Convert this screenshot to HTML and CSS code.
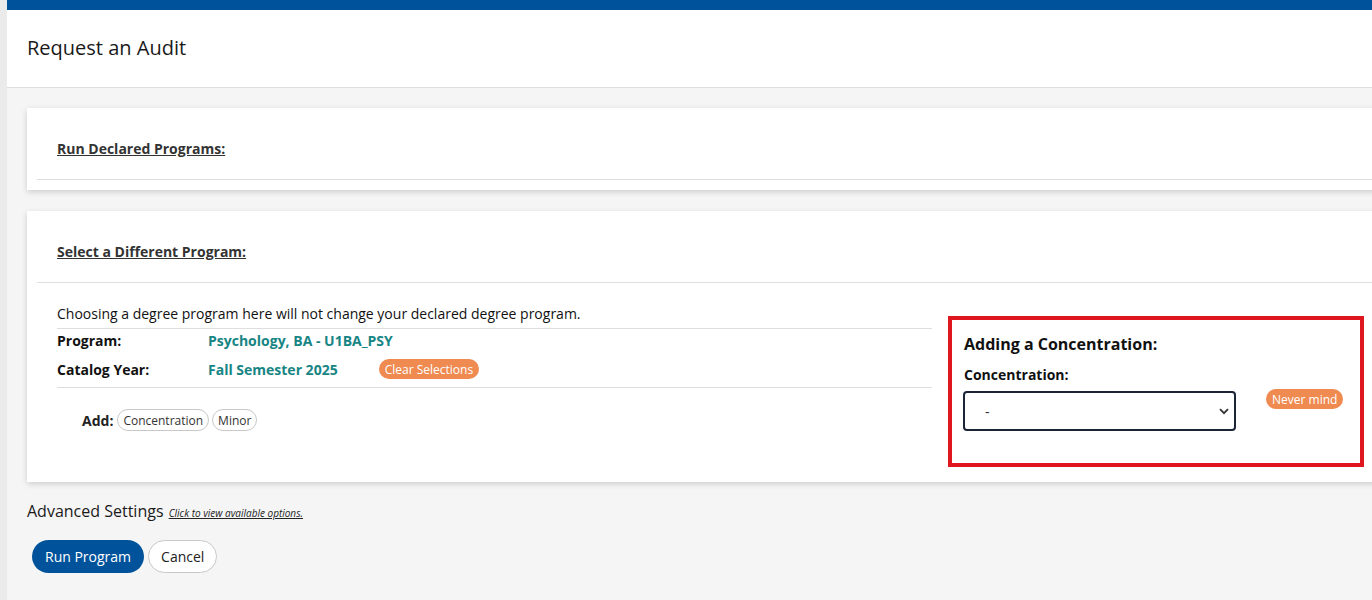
FILE: index.html
```html
<!DOCTYPE html>
<html lang="en">
<head>
    <meta charset="UTF-8">
    <meta name="viewport" content="width=device-width, initial-scale=1.0">
    <title>Request an Audit</title>
    <link rel="stylesheet" href="styles.css">
</head>
<body>
    <div class="page">
        <div class="topbar"></div>
        <div class="header">
            <h1>Request an Audit</h1>
        </div>

        <div class="content">
            <div class="card">
                <div class="card-title"><span>Run Declared Programs:</span></div>
            </div>

            <div class="card">
                <div class="card-title"><span>Select a Different Program:</span></div>
                <div class="card-body">
                    <div class="left-col">
                        <p class="note">Choosing a degree program here will not change your declared degree program.</p>
                        <div class="rows">
                            <div class="row">
                                <span class="label">Program:</span>
                                <span class="value">Psychology, BA - U1BA_PSY</span>
                            </div>
                            <div class="row">
                                <span class="label">Catalog Year:</span>
                                <span class="value">Fall Semester 2025</span>
                                <button class="pill-orange clear-btn">Clear Selections</button>
                            </div>
                        </div>
                        <div class="add-row">
                            <span class="add-label">Add:</span>
                            <button class="pill-outline">Concentration</button>
                            <button class="pill-outline">Minor</button>
                        </div>
                    </div>

                    <div class="right-col">
                        <div class="conc-box">
                            <h3>Adding a Concentration:</h3>
                            <label class="conc-label" for="conc">Concentration:</label>
                            <div class="conc-row">
                                <div class="select-wrap">
                                    <select id="conc">
                                        <option>-</option>
                                    </select>
                                    <svg class="chevron" width="10" height="7" viewBox="0 0 10 7">
                                        <path d="M1 1.2 L5 5.2 L9 1.2" fill="none" stroke="#333" stroke-width="1.8"/>
                                    </svg>
                                </div>
                                <button class="pill-orange">Never mind</button>
                            </div>
                        </div>
                    </div>
                </div>
            </div>

            <div class="advanced">
                <span class="adv-title">Advanced Settings</span>
                <a class="adv-link" href="#">Click to view available options.</a>
            </div>

            <div class="actions">
                <button class="btn-primary">Run Program</button>
                <button class="btn-secondary">Cancel</button>
            </div>
        </div>
    </div>
</body>
</html>
```

FILE: styles.css
```css
body {
    margin: 0;
    background: #ebebeb;
    font-family: "Open Sans", "Liberation Sans", sans-serif;
    color: #222;
    overflow: hidden;
}
.page {
    margin-left: 7px;
    background: #f5f5f5;
    min-height: 600px;
}
.topbar {
    height: 10px;
    background: #00539b;
}
.header {
    background: #fff;
    height: 78px;
    box-sizing: border-box;
    border-bottom: 1px solid #dedede;
    padding: 0 0 2px 20px;
    display: flex;
    align-items: center;
}
.header h1 {
    margin: 0;
    font-size: 20px;
    font-weight: 400;
    color: #1a1a1a;
}
.content {
    padding: 20px 0 0 20px;
}
.card {
    background: #fff;
    margin-right: -40px;
    margin-bottom: 21px;
    padding: 0 0 10px 10px;
    box-shadow: 0 2px 6px rgba(0, 0, 0, 0.16);
}
.card-title {
    padding: 30px 20px 20px;
    line-height: 20px;
    border-bottom: 1px solid #dedede;
}
.card-title span {
    font-size: 14px;
    font-weight: 700;
    color: #333;
    text-decoration: underline;
}
.card-body {
    display: flex;
    padding: 21px 0 0 20px;
}
.left-col {
    width: 875px;
}
.note {
    margin: 0;
    font-size: 14px;
    line-height: 20px;
    padding-bottom: 4px;
    border-bottom: 1px solid #dedede;
    color: #111;
}
.rows {
    display: flex;
    flex-direction: column;
    gap: 7px;
    padding: 0 0 7px;
    border-bottom: 1px solid #dedede;
}
.row {
    display: flex;
    align-items: center;
    height: 22px;
    font-size: 14px;
    font-weight: 700;
}
.label {
    width: 151px;
    color: #111;
}
.value {
    color: #178584;
}
.clear-btn {
    margin-left: 41px;
}
.pill-orange {
    background: #ef8a51;
    color: #fff;
    border: none;
    border-radius: 10px;
    height: 20px;
    padding: 0 6px;
    font-family: inherit;
    font-size: 12px;
    cursor: pointer;
}
.add-row {
    display: flex;
    align-items: center;
    gap: 3px;
    margin-top: 21px;
    padding-left: 25px;
    height: 22px;
}
.add-label {
    font-size: 14px;
    font-weight: 700;
    margin-right: 1px;
}
.pill-outline {
    background: #fff;
    border: 1px solid #c8c8c8;
    border-radius: 11px;
    height: 22px;
    padding: 0 5px;
    font-family: inherit;
    font-size: 12px;
    color: #333;
}
.right-col {
    margin-left: 16px;
    margin-top: 12px;
    margin-bottom: 5px;
}
.conc-box {
    border: 4px solid #e0161e;
    padding: 13px 0 32px 12px;
    width: 396px;
}
.conc-box h3 {
    margin: 0;
    font-size: 16px;
    line-height: 22px;
    font-weight: 700;
    color: #111;
}
.conc-label {
    display: block;
    margin-top: 10px;
    font-size: 14px;
    line-height: 20px;
    font-weight: 700;
    color: #111;
}
.conc-row {
    display: flex;
    align-items: flex-start;
    margin-top: 6px;
}
.select-wrap {
    position: relative;
    margin-left: -1px;
}
.select-wrap select {
    appearance: none;
    -webkit-appearance: none;
    width: 273px;
    height: 40px;
    border: 2px solid #1b2535;
    border-radius: 4px;
    background: #fff;
    padding: 0 20px;
    font-family: inherit;
    font-size: 14px;
    color: #333;
}
.chevron {
    position: absolute;
    right: 7px;
    top: 17px;
    pointer-events: none;
}
.conc-row .pill-orange {
    margin-left: 30px;
    margin-top: -2px;
    padding: 0 6px;
}
.advanced {
    margin-top: -3px;
    line-height: 22px;
}
.adv-title {
    font-size: 16px;
    color: #1a1a1a;
}
.adv-link {
    font-size: 10px;
    font-style: italic;
    color: #222;
    margin-left: 1px;
}
.actions {
    display: flex;
    gap: 4px;
    margin-top: 16px;
    margin-left: 5px;
}
.btn-primary {
    background: #00539b;
    color: #fff;
    border: none;
    border-radius: 17px;
    height: 33px;
    padding: 0 13px;
    font-family: inherit;
    font-size: 14px;
    cursor: pointer;
}
.btn-secondary {
    background: #fff;
    color: #222;
    border: 1px solid #c8c8c8;
    border-radius: 17px;
    height: 33px;
    padding: 0 12px;
    font-family: inherit;
    font-size: 14px;
    cursor: pointer;
}
```
